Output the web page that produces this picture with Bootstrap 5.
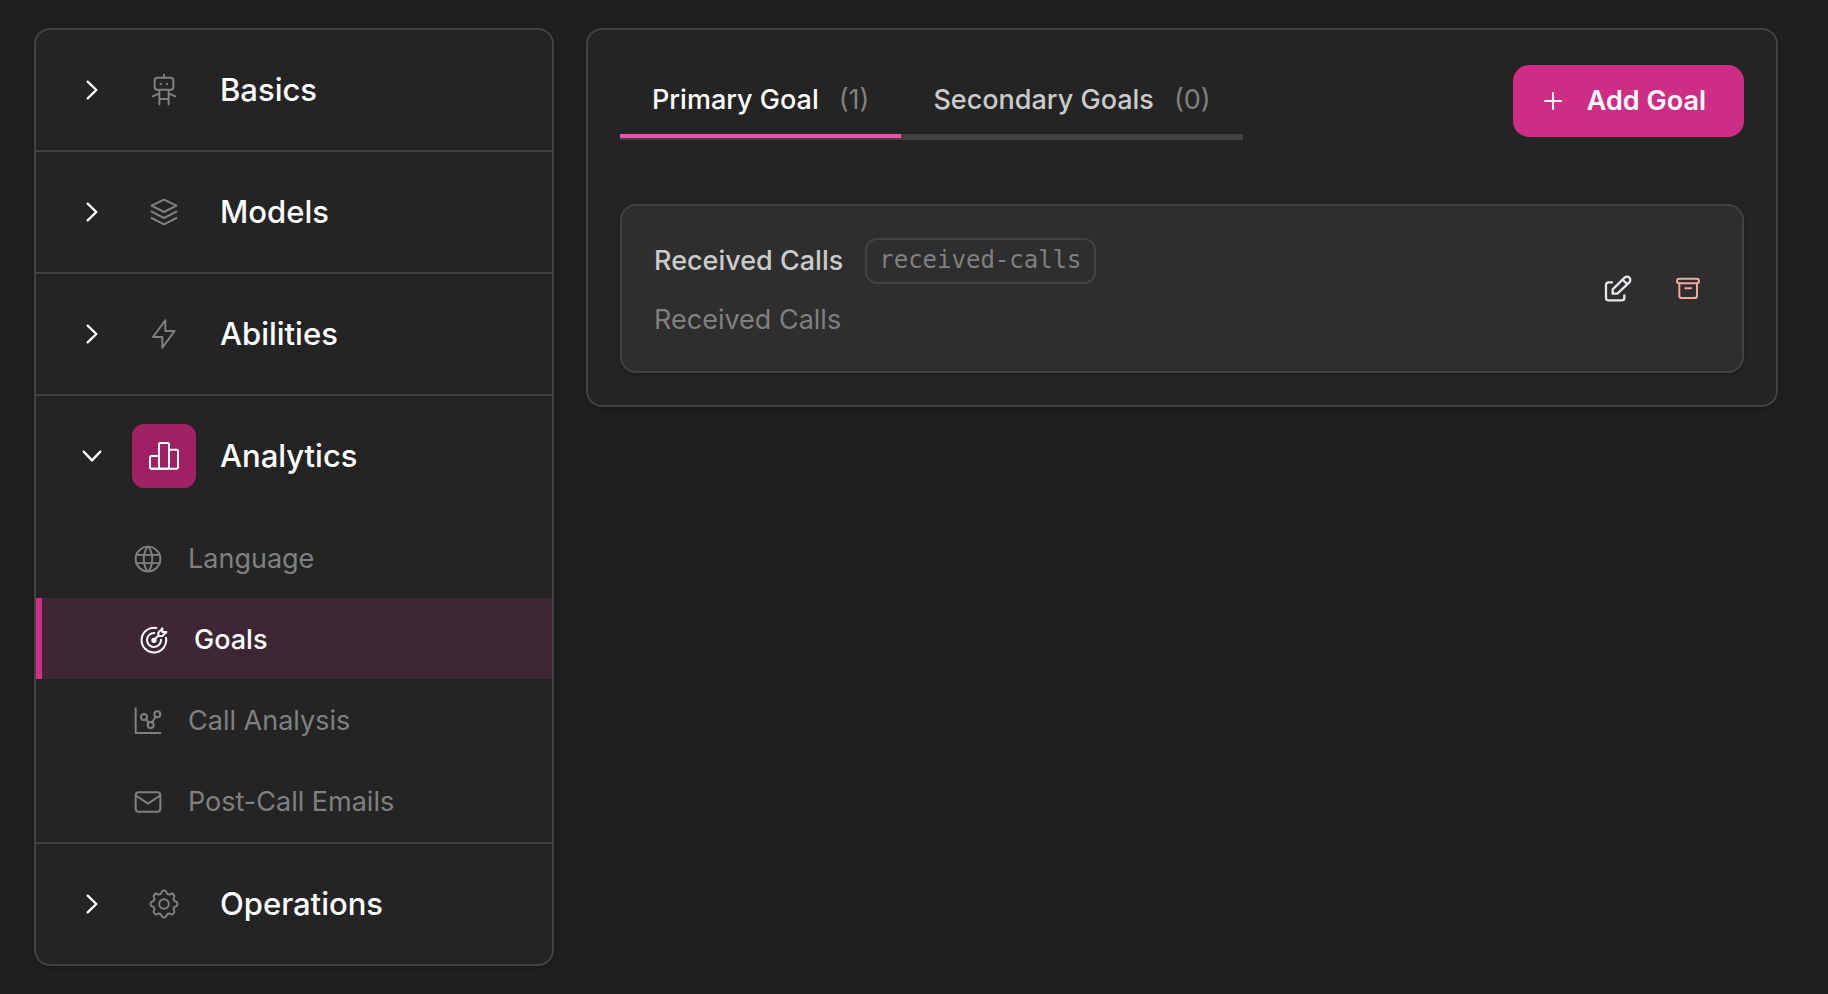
<!DOCTYPE html>
<html lang="en" data-bs-theme="dark">
<head>
<meta charset="utf-8">
<meta name="viewport" content="width=device-width, initial-scale=1">
<title>Goals</title>
<link href="https://cdn.jsdelivr.net/npm/bootstrap@5.3.0/dist/css/bootstrap.min.css" rel="stylesheet">
<style>
  :root { --line: #424242; --muted: #808080; --soft: #cbcbcb; --panel: #242424; --pink: #cd2d85; }
  body { background: #1f1f1f; color: #fff; font-family: Inter, "Liberation Sans", sans-serif; font-size: 27px; line-height: 38px; }
  svg { display: block; flex: none; fill: none; stroke: currentColor; stroke-linecap: round; stroke-linejoin: round; }
  .shell { padding: 28px 50px 28px 34px; gap: 32px; }
  .panel { background: var(--panel); border: 2px solid var(--line); border-radius: 16px; box-shadow: 0 2px 4px rgba(0, 0, 0, .2); }
  .side-menu { width: 520px; overflow: hidden; }
  .menu-group + .menu-group { border-top: 2px solid var(--line); }
  .group-toggle { height: 120px; padding: 0 46px; background: none; color: #fff; font-size: 31px; font-weight: 500; }
  .group-icon { width: 64px; height: 64px; margin: 0 24px 0 30px; border-radius: 12px; color: var(--muted); }
  .group-icon.current { background: #9f2063; color: #fff; }
  .sub-list { padding: 1px 0; }
  .sub-link { height: 81px; padding: 2px 0 0 98px; gap: 26px; color: var(--muted); }
  .sub-link.active { background: #3f2634; border-left: 6px solid #d12d89; color: #fff; font-weight: 500; }
  .goal-panel { padding: 32px; }
  .goal-tabs { box-shadow: inset 0 -6px var(--line); padding-bottom: 2px; }
  .goal-tab { height: 76px; padding: 4px 32px 0; gap: 20px; background: none; border: 0; border-bottom: 4px solid transparent; color: var(--soft); font-weight: 500; }
  .goal-tab.active { color: #fff; border-color: #f051a9; }
  .tab-count { color: var(--muted); font-weight: 400; }
  .add-goal { height: 72px; padding: 0 38px 0 28px; gap: 22px; border: 0; border-radius: 16px; background: var(--pink); color: #fff; font-size: 27px; font-weight: 600; }
  .goal-item { margin-top: 64px; padding: 32px; background: #2e2e2e; border: 2px solid var(--line); border-radius: 16px; box-shadow: 0 2px 4px rgba(0, 0, 0, .2); }
  .goal-heading { gap: 22px; }
  .goal-name { font-size: 27px; line-height: 38px; font-weight: 500; color: var(--soft); }
  .goal-slug { padding: 0 12px 2px; border: 2px solid var(--line); border-radius: 12px; color: var(--muted); font: 24px/40px "DejaVu Sans Mono", monospace; }
  .goal-note { margin-top: 17px; color: var(--muted); }
  .goal-tools { gap: 26px; }
  .tool-btn { width: 44px; height: 44px; background: none; color: #e4e7eb; }
  .tool-btn.archive { color: #f3a6a2; }
</style>
</head>
<body>
<div class="shell d-flex align-items-start">
  <nav class="side-menu panel flex-shrink-0" aria-label="Agent settings">
    <div class="menu-group">
      <button type="button" class="group-toggle btn border-0 rounded-0 w-100 d-flex align-items-center" aria-expanded="false">
        <svg width="20" height="20" viewBox="0 0 60 60" stroke-width="7"><path d="M17 5l26 25-26 25"/></svg>
        <span class="group-icon d-flex align-items-center justify-content-center"><svg width="32" height="32" viewBox="0 0 96 96" stroke-width="6"><rect x="20" y="11" width="56" height="36" rx="8"/><path d="M48 2v9M38 29v2M57 29v2M34 48v43M62 48v43M34 75h28M34 58l-20 9M62 58l20 9"/></svg></span>
        Basics
      </button>
    </div>
    <div class="menu-group">
      <button type="button" class="group-toggle btn border-0 rounded-0 w-100 d-flex align-items-center" aria-expanded="false">
        <svg width="20" height="20" viewBox="0 0 60 60" stroke-width="7"><path d="M17 5l26 25-26 25"/></svg>
        <span class="group-icon d-flex align-items-center justify-content-center"><svg width="32" height="32" viewBox="0 0 96 96" stroke-width="6"><path d="M48 11l37 18-37 19-37-19zM11 47l37 19 37-19M11 66l37 19 37-19"/></svg></span>
        Models
      </button>
    </div>
    <div class="menu-group">
      <button type="button" class="group-toggle btn border-0 rounded-0 w-100 d-flex align-items-center" aria-expanded="false">
        <svg width="20" height="20" viewBox="0 0 60 60" stroke-width="7"><path d="M17 5l26 25-26 25"/></svg>
        <span class="group-icon d-flex align-items-center justify-content-center"><svg width="32" height="32" viewBox="0 0 96 96" stroke-width="6"><path d="M52 7v32H80L43 89V57H15z"/></svg></span>
        Abilities
      </button>
    </div>
    <div class="menu-group">
      <button type="button" class="group-toggle btn border-0 rounded-0 w-100 d-flex align-items-center" aria-expanded="true" aria-controls="analytics-list">
        <svg width="20" height="20" viewBox="0 0 60 60" stroke-width="7"><path d="M5 17l25 26 25-26"/></svg>
        <span class="group-icon current d-flex align-items-center justify-content-center"><svg width="32" height="32" viewBox="0 0 96 96" stroke-width="6"><rect x="6" y="48" width="27" height="38" rx="4"/><rect x="33" y="9" width="30" height="77" rx="4"/><path d="M63 29h23q4 0 4 4v49q0 4-4 4H63M10 86h74"/></svg></span>
        Analytics
      </button>
      <div class="sub-list" id="analytics-list">
        <a href="#language" class="sub-link d-flex align-items-center text-decoration-none">
          <svg width="28" height="28" viewBox="1.8 1.8 20.4 20.4" stroke-width="1.4"><circle cx="12" cy="12" r="9"/><path d="M3.6 9h16.8M3.6 15h16.8M11.5 3a17 17 0 0 0 0 18M12.5 3a17 17 0 0 1 0 18"/></svg>
          Language
        </a>
        <a href="#goals" class="sub-link active d-flex align-items-center text-decoration-none" aria-current="page">
          <svg width="28" height="28" viewBox="0 0 84 84" stroke-width="6"><path d="M49 6A37 37 0 1 0 78 35M43 21A21 21 0 1 0 63 41M42 42L56 28M55 30V20L67 7v11h12L67 30z"/><circle cx="42" cy="43" r="5" fill="currentColor"/></svg>
          Goals
        </a>
        <a href="#call-analysis" class="sub-link d-flex align-items-center text-decoration-none">
          <svg width="28" height="28" viewBox="0 0 84 84" stroke-width="6"><path d="M5 4v74h74M36 37l8 10M54 46l11-16"/><circle cx="30" cy="30" r="9"/><circle cx="50" cy="54" r="9"/><circle cx="70" cy="22" r="9"/></svg>
          Call Analysis
        </a>
        <a href="#post-call-emails" class="sub-link d-flex align-items-center text-decoration-none">
          <svg width="28" height="28" viewBox="0 0 84 84" stroke-width="6"><rect x="5" y="13" width="74" height="58" rx="9"/><path d="M6 23l36 24 36-24"/></svg>
          Post-Call Emails
        </a>
      </div>
    </div>
    <div class="menu-group">
      <button type="button" class="group-toggle btn border-0 rounded-0 w-100 d-flex align-items-center" aria-expanded="false">
        <svg width="20" height="20" viewBox="0 0 60 60" stroke-width="7"><path d="M17 5l26 25-26 25"/></svg>
        <span class="group-icon d-flex align-items-center justify-content-center"><svg width="36" height="36" viewBox="0 0 24 24" stroke-width="1.3"><path d="M10.325 4.317c.426-1.756 2.924-1.756 3.35 0a1.724 1.724 0 0 0 2.573 1.066c1.543-.94 3.31.826 2.37 2.37a1.724 1.724 0 0 0 1.065 2.572c1.756.426 1.756 2.924 0 3.35a1.724 1.724 0 0 0-1.066 2.573c.94 1.543-.826 3.31-2.37 2.37a1.724 1.724 0 0 0-2.572 1.065c-.426 1.756-2.924 1.756-3.35 0a1.724 1.724 0 0 0-2.573-1.066c-1.543.94-3.31-.826-2.37-2.37a1.724 1.724 0 0 0-1.065-2.572c-1.756-.426-1.756-2.924 0-3.35a1.724 1.724 0 0 0 1.066-2.573c-.94-1.543.826-3.31 2.37-2.37c1 .608 2.296.07 2.572-1.065z"/><circle cx="12" cy="12" r="3.2"/></svg></span>
        Operations
      </button>
    </div>
  </nav>

  <main class="goal-panel panel flex-grow-1">
    <div class="d-flex align-items-center justify-content-between">
      <div class="goal-tabs d-flex" role="tablist">
        <button type="button" class="goal-tab active d-flex align-items-center" role="tab" aria-selected="true">Primary Goal <span class="tab-count">(1)</span></button>
        <button type="button" class="goal-tab d-flex align-items-center" role="tab" aria-selected="false">Secondary Goals <span class="tab-count">(0)</span></button>
      </div>
      <button type="button" class="add-goal btn d-flex align-items-center">
        <svg width="24" height="24" viewBox="0 0 24 24" stroke-width="2"><path d="M12 4v16M4 12h16"/></svg>
        Add Goal
      </button>
    </div>
    <article class="goal-item d-flex align-items-center justify-content-between">
      <div>
        <div class="goal-heading d-flex align-items-center">
          <h2 class="goal-name m-0">Received Calls</h2>
          <code class="goal-slug">received-calls</code>
        </div>
        <p class="goal-note mb-0">Received Calls</p>
      </div>
      <div class="goal-tools d-flex">
        <button type="button" class="tool-btn btn border-0 p-0 d-flex align-items-center justify-content-center" aria-label="Edit goal"><svg width="28" height="28" viewBox="0 0 84 84" stroke-width="7"><path d="M24 22H14q-8 0-8 8v38q0 8 8 8h39q8 0 8-8v-7M26 56V43L62 8a9 9 0 0 1 14 14L40 56zM57 15l12 12"/></svg></button>
        <button type="button" class="tool-btn archive btn border-0 p-0 d-flex align-items-center justify-content-center" aria-label="Archive goal"><svg width="28" height="28" viewBox="0 0 84 84" stroke-width="6"><rect x="9" y="11" width="66" height="14" rx="7"/><path d="M16 25v37q0 7 7 7h39q7 0 7-7V25M34 40h17"/></svg></button>
      </div>
    </article>
  </main>
</div>
<script src="https://cdn.jsdelivr.net/npm/bootstrap@5.3.0/dist/js/bootstrap.bundle.min.js"></script>
</body>
</html>
